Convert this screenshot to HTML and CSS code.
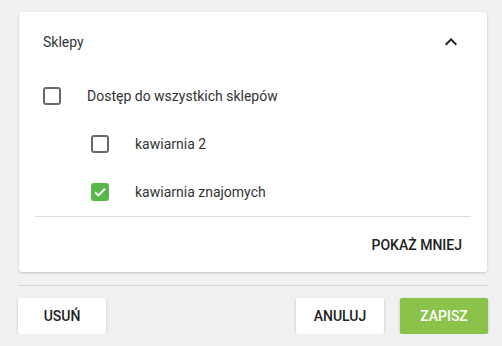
FILE: index.html
```html
<!DOCTYPE html>
<html lang="pl">
<head>
<meta charset="utf-8">
<link rel="stylesheet" href="styles.css">
</head>
<body>
<div class="page">
  <div class="card">
    <div class="card-header">
      <span class="title">Sklepy</span>
      <svg class="chevron" width="24" height="24" viewBox="0 0 24 24"><path d="M7.41 15.41 12 10.83l4.59 4.58L18 14l-6-6-6 6z" fill="#212121"/></svg>
    </div>
    <label class="row">
      <span class="box"></span>
      <span class="label">Dostęp do wszystkich sklepów</span>
    </label>
    <label class="row nested">
      <span class="box"></span>
      <span class="label">kawiarnia 2</span>
    </label>
    <label class="row nested">
      <span class="box checked"><svg width="18" height="18" viewBox="0 0 18 18"><path d="M4 9.2 7.3 12.4 14 5.8" fill="none" stroke="#fff" stroke-width="2"/></svg></span>
      <span class="label">kawiarnia znajomych</span>
    </label>
    <div class="divider"></div>
    <div class="card-footer">
      <span class="text-btn">POKAŻ MNIEJ</span>
    </div>
  </div>
  <div class="separator"></div>
  <div class="actions">
    <button class="btn">USUŃ</button>
    <div class="spacer"></div>
    <button class="btn">ANULUJ</button>
    <button class="btn primary">ZAPISZ</button>
  </div>
</div>
</body>
</html>
```
FILE: styles.css
```css
html, body {
  margin: 0;
  padding: 0;
  background: #f1f1f1;
  font-family: Roboto, "Liberation Sans", sans-serif;
  color: #333;
  font-size: 14px;
}
.page {
  padding: 12px 14px 0 18px;
}
.card {
  margin: 0 1px;
  background: #fff;
  border-radius: 3px;
  box-shadow: 0 1px 3px rgba(0,0,0,0.12), 0 1px 2px rgba(0,0,0,0.08);
}
.card-header {
  height: 60px;
  display: flex;
  align-items: center;
  justify-content: space-between;
  padding: 0 24px;
}
.title {
  font-size: 14px;
  color: #333;
}
.chevron {
  display: block;
}
.row {
  height: 48px;
  display: flex;
  align-items: center;
  padding-left: 24px;
}
.row.nested {
  padding-left: 72px;
}
.box {
  width: 18px;
  height: 18px;
  box-sizing: border-box;
  border: 2px solid #6b6b6b;
  border-radius: 3px;
  flex: none;
  display: flex;
  align-items: center;
  justify-content: center;
}
.box.checked {
  background: #56b947;
  border-color: #56b947;
}
.box svg {
  display: block;
  flex: none;
}
.label {
  margin-left: 26px;
  color: #333;
}
.divider {
  height: 1px;
  background: #dedede;
  margin: 0 16px;
}
.card-footer {
  height: 55px;
  display: flex;
  align-items: center;
  justify-content: flex-end;
  padding-right: 25px;
}
.text-btn {
  font-weight: 500;
  color: #212121;
  font-size: 14px;
}
.separator {
  height: 1px;
  background: #d6d6d6;
  margin-top: 13px;
}
.actions {
  display: flex;
  gap: 16px;
  margin-top: 12px;
}
.spacer {
  flex: 1;
}
.btn {
  width: 88px;
  height: 36px;
  border: none;
  border-radius: 2px;
  background: #fff;
  color: #212121;
  font-family: Roboto, "Liberation Sans", sans-serif;
  font-size: 14px;
  font-weight: 500;
  box-shadow: 0 1px 3px rgba(0,0,0,0.2);
  padding: 0;
}
.btn.primary {
  background: #8bc34a;
  color: #fff;
}
```
